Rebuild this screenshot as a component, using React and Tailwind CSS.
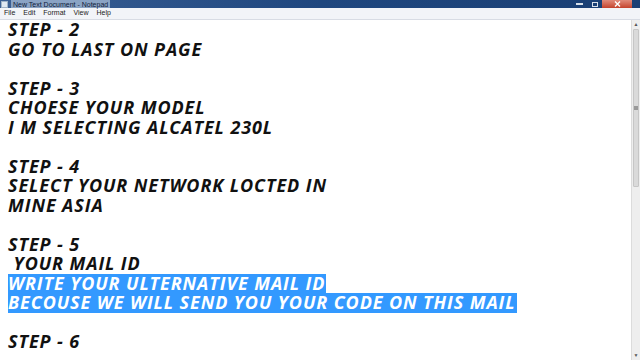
import React from 'react';

const lines = [
  { t: 'STEP - 2' },
  { t: 'GO TO LAST ON PAGE' },
  { t: '' },
  { t: 'STEP - 3' },
  { t: 'CHOESE YOUR MODEL' },
  { t: 'I M SELECTING ALCATEL 230L' },
  { t: '' },
  { t: 'STEP - 4' },
  { t: 'SELECT YOUR NETWORK LOCTED IN' },
  { t: 'MINE ASIA' },
  { t: '' },
  { t: 'STEP - 5' },
  { t: ' YOUR MAIL ID' },
  { t: 'WRITE YOUR ULTERNATIVE MAIL ID', sel: true },
  { t: 'BECOUSE WE WILL SEND YOU YOUR CODE ON THIS MAIL', sel: true },
  { t: '' },
  { t: 'STEP - 6' },
];

const App = () => {
  return (
    <div className="w-[640px] h-[360px] overflow-hidden bg-white flex flex-col">
      {/* title bar */}
      <div className="h-[8px] flex items-center bg-gradient-to-r from-[#3a5f94] via-[#1f477f] to-[#1a3f74] relative">
        <div className="w-[7px] h-[7px] ml-[1px] bg-[#dfe8f2] border border-[#9fb3c8]" />
        <span className="ml-[3px] px-[2px] h-[8px] flex items-center bg-[#8aa3c4] text-[7px] leading-none text-[#10203a]" style={{ fontFamily: '"Liberation Sans", sans-serif' }}>
          New Text Document - Notepad
        </span>
        <div className="absolute right-[8px] top-0 h-[8px] flex">
          <div className="w-[18px] h-[8px] flex items-center justify-center">
            <div className="w-[7px] h-[2px] bg-[#d8e0ea]" />
          </div>
          <div className="w-[14px] h-[8px] flex items-center justify-center">
            <div className="w-[6px] h-[5px] border border-[#d8e0ea]" />
          </div>
          <div className="w-[30px] h-[8px] bg-gradient-to-b from-[#e08a7a] to-[#c4412c] flex items-center justify-center">
            <svg width="7" height="6" viewBox="0 0 7 6">
              <path d="M1 0.5 L6 5.5 M6 0.5 L1 5.5" stroke="#fff" strokeWidth="1.4" />
            </svg>
          </div>
        </div>
      </div>
      {/* menu bar */}
      <div className="h-[12px] bg-[#f2f4f8] border-b border-[#d8dce4] flex items-center gap-[8px] pl-[4px] text-[7px] text-[#222]" style={{ fontFamily: '"Liberation Sans", sans-serif' }}>
        <span>File</span>
        <span>Edit</span>
        <span>Format</span>
        <span>View</span>
        <span>Help</span>
      </div>
      <div className="flex-1 flex min-h-0">
        <div className="flex-1 pl-[8px] overflow-hidden">
          {lines.map((l, i) => (
            <div key={i} className="h-[19.5px] leading-[19.5px] whitespace-pre">
              <span
                className={
                  'inline-block h-[19.5px] leading-[19.5px] align-top text-[18px] font-bold italic tracking-[0.9px] ' +
                  (l.sel ? 'bg-[#3399ff] text-white pr-[1px]' : 'text-[#111]')
                }
                style={{ fontFamily: '"Open Sans", sans-serif' }}
              >
                {l.t || ' '}
              </span>
            </div>
          ))}
        </div>
        {/* scrollbar */}
        <div className="w-[9px] bg-[#eeeeee] border-l border-[#dcdcdc] flex flex-col">
          <div className="h-[9px] flex items-center justify-center text-[5px] text-[#555]">▲</div>
          <div className="h-[158px] mx-[1px] bg-[#dadada] border border-[#c6c6c6] rounded-[1px] flex items-center justify-center">
            <div className="w-[4px] h-[4px] bg-[#999]" />
          </div>
          <div className="flex-1" />
          <div className="h-[9px] flex items-center justify-center text-[5px] text-[#555]">▼</div>
        </div>
      </div>
    </div>
  );
};

export default App;
